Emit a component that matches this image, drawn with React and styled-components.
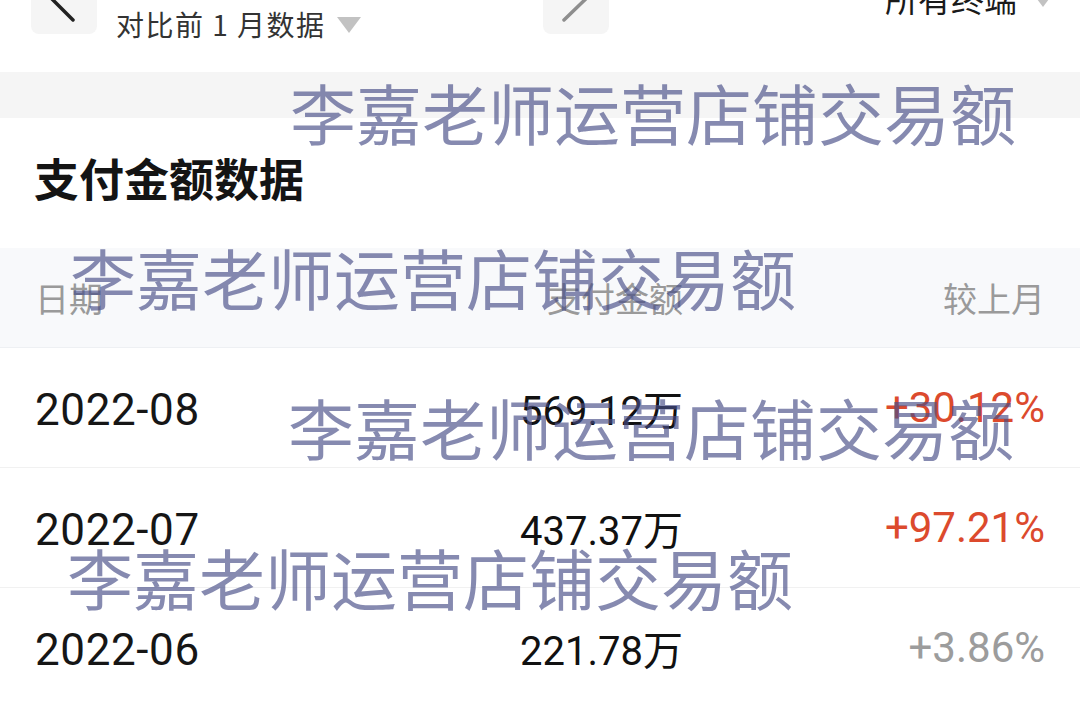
import React from 'react';
import styled, { createGlobalStyle } from 'styled-components';

const GlobalStyle = createGlobalStyle`
    html, body {
        margin: 0;
        padding: 0;
        background: #ffffff;
    }
    body {
        font-family: Roboto, "Noto Sans CJK SC", sans-serif;
        overflow: hidden;
    }
`;

const Page = styled.div`
    position: relative;
    width: 1080px;
    height: 706px;
    overflow: hidden;
    background: #ffffff;
`;

/* top toolbar, cut off by the top of the screen */
const Toolbar = styled.div`
    height: 72px;
    display: flex;
    align-items: flex-start;
    padding: 0 25px 0 31px;
    overflow: hidden;
`;

const NavButton = styled.div`
    width: 66px;
    height: 64px;
    margin-top: -30px;
    margin-left: ${p => p.$gap || 0}px;
    border-radius: 8px;
    background: #f5f5f5;
    flex-shrink: 0;
    svg {
        display: block;
    }
`;

const CompareLabel = styled.div`
    display: flex;
    align-items: center;
    gap: 11px;
    margin-left: 19px;
    margin-top: 6px;
    width: 360px;
    font-family: "Noto Sans CJK SC", sans-serif;
    font-size: 28px;
    letter-spacing: 1.5px;
    line-height: 36px;
    color: #333333;
`;

const Caret = styled.span`
    display: inline-block;
    width: 0;
    height: 0;
    border-left: 12px solid transparent;
    border-right: 12px solid transparent;
    border-top: 16px solid #c2c2c2;
    margin-top: 2px;
`;

const TerminalSelect = styled.div`
    margin-left: auto;
    margin-top: -22px;
    display: flex;
    align-items: center;
    gap: 14px;
    font-family: "Noto Sans CJK SC", sans-serif;
    font-size: 33px;
    line-height: 40px;
    color: #1a1a1a;
`;

const GrayBand = styled.div`
    height: 46px;
    background: #f5f5f5;
`;

const SectionTitle = styled.div`
    height: 130px;
    display: flex;
    align-items: center;
    padding-left: 34px;
    padding-bottom: 12px;
    box-sizing: border-box;
    font-family: "Noto Sans CJK SC", sans-serif;
    font-weight: 700;
    font-size: 45px;
    color: #141414;
`;

const Row = styled.div`
    display: grid;
    grid-template-columns: 448px 200px 1fr;
    align-items: center;
    padding: 0 35px;
    height: ${p => (p.$head ? '100px' : '120px')};
    background: ${p => (p.$head ? '#f8f9fb' : '#ffffff')};
    border-bottom: 1px solid ${p => (p.$head ? '#eef0f3' : '#f1f1f1')};
    box-sizing: border-box;
`;

const HeadCell = styled.div`
    font-family: "Noto Sans CJK SC", sans-serif;
    font-size: 34px;
    color: #9a9a9a;
    text-align: ${p => p.$align || 'left'};
`;

const DateCell = styled.div`
    font-size: 44px;
    letter-spacing: 0.6px;
    color: #161616;
    padding-top: 4px;
`;

const AmountCell = styled.div`
    font-size: 40px;
    color: #111111;
    text-align: right;
`;

const ChangeCell = styled.div`
    font-size: 42px;
    text-align: right;
    color: ${p => (p.$up ? '#dc4a2d' : '#9c9c9c')};
`;

const Watermark = styled.div`
    position: absolute;
    left: ${p => p.$x}px;
    top: ${p => p.$y}px;
    font-family: "Noto Sans CJK SC", sans-serif;
    font-size: 66px;
    line-height: 1;
    white-space: nowrap;
    color: rgba(72, 78, 135, 0.66);
    pointer-events: none;
`;

const rows = [
    { month: '2022-08', amount: '569.12万', change: '+30.12%', up: true },
    { month: '2022-07', amount: '437.37万', change: '+97.21%', up: true },
    { month: '2022-06', amount: '221.78万', change: '+3.86%', up: false },
];

const marks = [
    { x: 290, y: 78 },
    { x: 70, y: 243 },
    { x: 288, y: 393 },
    { x: 67, y: 543 },
];

const App = () => {
    return (
        <Page>
            <GlobalStyle />
            <Toolbar>
                <NavButton>
                    <svg width="66" height="64" viewBox="0 0 66 64">
                        <path d="M42 -12 L11 19 L42 50" fill="none" stroke="#222" strokeWidth="3.5" strokeLinecap="round" />
                    </svg>
                </NavButton>
                <CompareLabel>
                    对比前 1 月数据
                    <Caret />
                </CompareLabel>
                <NavButton $gap={67}>
                    <svg width="66" height="64" viewBox="0 0 66 64">
                        <path d="M21 -12 L53 19 L21 50" fill="none" stroke="#8e8e8e" strokeWidth="3.5" strokeLinecap="round" />
                    </svg>
                </NavButton>
                <TerminalSelect>
                    所有终端
                    <Caret />
                </TerminalSelect>
            </Toolbar>
            <GrayBand />
            <SectionTitle>支付金额数据</SectionTitle>
            <Row $head>
                <HeadCell>日期</HeadCell>
                <HeadCell $align="right">支付金额</HeadCell>
                <HeadCell $align="right">较上月</HeadCell>
            </Row>
            {rows.map(r => (
                <Row key={r.month}>
                    <DateCell>{r.month}</DateCell>
                    <AmountCell>{r.amount}</AmountCell>
                    <ChangeCell $up={r.up}>{r.change}</ChangeCell>
                </Row>
            ))}
            {marks.map((m, i) => (
                <Watermark key={i} $x={m.x} $y={m.y}>李嘉老师运营店铺交易额</Watermark>
            ))}
        </Page>
    );
};

export default App;
